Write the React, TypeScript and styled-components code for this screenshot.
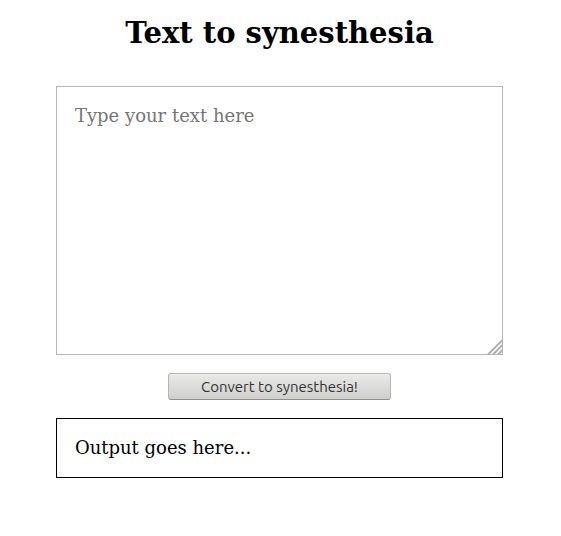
import React, { useState } from "react";
import styled, { createGlobalStyle } from "styled-components";

const GlobalStyle = createGlobalStyle`
  * { box-sizing: border-box; }
  body {
    margin: 0;
    padding-right: 2px;
    background: #fff;
    color: #000;
    font-family: "DejaVu Serif", serif;
  }
`;

const Page = styled.main`
  display: flex;
  flex-direction: column;
  width: 80%;
  margin: 0 auto;
  padding-top: 14px;
  gap: 18px;
  align-items: stretch;
`;

const Title = styled.h1`
  margin: 0 0 16px;
  font-size: 29px;
  line-height: 38px;
  text-align: center;
`;

const InputFrame = styled.div`
  position: relative;
  display: flex;
`;

const TextInput = styled.textarea`
  flex: 1;
  min-width: 0;
  height: 269px;
  margin: 0;
  padding: 18px;
  border: 1px solid #b6b6b3;
  border-radius: 0;
  outline: none;
  resize: vertical;
  font: 18px/22px "DejaVu Serif", serif;
  &::placeholder { color: #757575; opacity: 1; }
  &::-webkit-resizer { background: transparent; }
`;

const Grip = styled.svg`
  position: absolute;
  right: 0;
  bottom: 0;
  pointer-events: none;
`;

const ConvertButton = styled.button`
  align-self: center;
  width: 50%;
  height: 27px;
  padding: 0;
  border: 1px solid #b4b4b0;
  border-bottom-color: #92928d;
  border-radius: 3px;
  background: linear-gradient(#e9e9e8, #d0d0ce);
  box-shadow: inset 0 1px 0 #f2f2f1;
  color: #333;
  font: 15px/20px Ubuntu, "Noto Sans", sans-serif;
`;

const Output = styled.output`
  display: block;
  padding: 18px;
  border: 1px solid #000;
  font-size: 18px;
  line-height: 22px;
`;

export default function App() {
  const [text, setText] = useState("");
  const [result, setResult] = useState("");
  return (
    <>
      <GlobalStyle />
      <Page>
        <Title>Text to synesthesia</Title>
        <InputFrame>
          <TextInput
            id="source"
            aria-label="Text to convert"
            placeholder="Type your text here"
            value={text}
            onChange={(e) => setText(e.target.value)}
          />
          <Grip width="16" height="16" viewBox="0 0 16 16" aria-hidden="true">
            <path d="M1 15.5L15.5 1M6 15.5L15.5 6M11 15.5L15.5 11" stroke="#b0b0b0" strokeWidth="2" />
          </Grip>
        </InputFrame>
        <ConvertButton type="button" onClick={() => setResult(text)}>
          Convert to synesthesia!
        </ConvertButton>
        <Output htmlFor="source">{result || "Output goes here..."}</Output>
      </Page>
    </>
  );
}
